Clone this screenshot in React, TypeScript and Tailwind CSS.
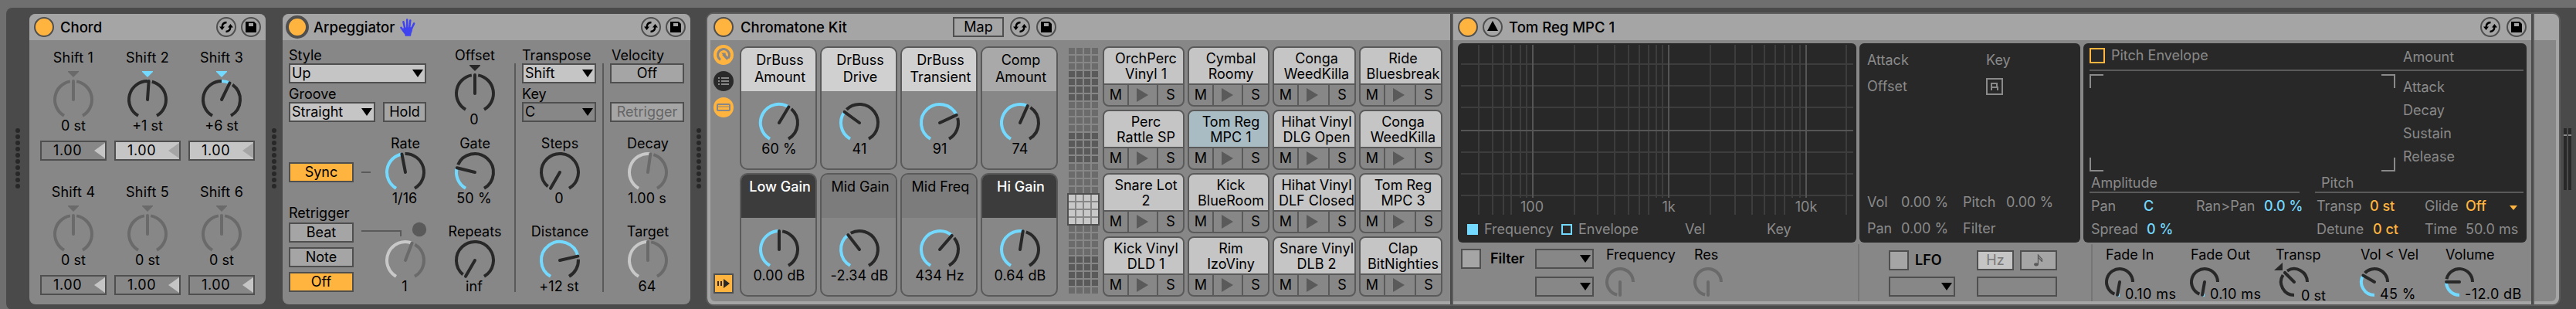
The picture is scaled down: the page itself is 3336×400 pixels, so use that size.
import type { ReactNode } from "react";

const BLUE = "#74d9ff";
const DARK = "#282828";
const MUTED = "#6a6a6a";

type KnobProps = {
  angle: number;
  label?: string;
  value: string;
  muted?: boolean;
  bipolar?: boolean;
};

function point(angle: number, r: number) {
  const a = (angle * Math.PI) / 180;
  return `${(Math.sin(a) * r).toFixed(2)} ${(-Math.cos(a) * r).toFixed(2)}`;
}

function arc(from: number, to: number, r: number) {
  if (to <= from) return "";
  return `M${point(from, r)}A${r} ${r} 0 ${to - from > 180 ? 1 : 0} 1 ${point(to, r)}`;
}

// Large dial, sweeps 300 degrees
function Dial({ angle, muted, bipolar }: { angle: number; muted?: boolean; bipolar?: boolean }) {
  const ink = muted ? MUTED : DARK;
  const fill = muted ? "#c8c8c8" : BLUE;
  return (
    <svg width="52" height="50" viewBox="-26 -26 52 50" className="block shrink-0 overflow-visible" fill="none" strokeWidth="4">
      {bipolar ? (
        <>
          <path d="M-7 -37H7V-36L0 -29L-7 -36Z" fill={muted || angle === 0 ? ink : BLUE} />
          <path d={arc(-150, angle === 0 ? -10 : 0, 24)} stroke={ink} />
          <path d={arc(0, angle, 24)} stroke={fill} />
        </>
      ) : (
        <path d={arc(-150, angle, 24)} stroke={fill} />
      )}
      <path d={arc(angle + 10, 150, 24)} stroke={ink} />
      <path d={`M0 0L${point(angle, 24)}`} stroke={ink} strokeLinecap="round" />
    </svg>
  );
}

function Knob({ label, value, ...dial }: KnobProps) {
  return (
    <div className="flex flex-col items-center whitespace-nowrap">
      <div className="h-5 leading-5">{label}</div>
      <div className="h-px" />
      <Dial {...dial} />
      <div className="h-5 pr-0.5 leading-5 tracking-[0.1px]">{value}</div>
    </div>
  );
}

// Small dial, sweeps from 6 o'clock to 3 o'clock
function SmallKnob({ label, value, angle, muted, bipolar }: { label: string; value?: string; angle: number; muted?: boolean; bipolar?: boolean }) {
  const ink = muted ? MUTED : DARK;
  return (
    <div className="w-[110px] whitespace-nowrap pt-[5px]">
      <div className="h-5 leading-5">{label}</div>
      <div className={bipolar ? "ml-[5px] flex h-[48px]" : "-ml-px flex h-[48px]"}>
        <svg width="38" height="38" viewBox="-19 -19 38 38" className="mt-1.5 block shrink-0 overflow-visible" fill="none" strokeWidth="4">
          {bipolar ? (
            <>
              <path d="M-15 -25V-15H-26Z" fill={ink} />
              <path d={arc(-180, angle - 13, 17)} stroke={ink} />
            </>
          ) : (
            <path d={arc(-180, angle, 17)} stroke={muted ? ink : BLUE} />
          )}
          <path d={arc(angle + 13, 90, 17)} stroke={ink} />
          <path d={`M0 0L${point(angle, 17)}`} stroke={ink} strokeLinecap="round" />
        </svg>
        <div className={bipolar ? "ml-[-10px] mt-[33px] leading-5" : "ml-[-12px] mt-[31px] leading-5 tracking-[0.4px]"}>{value}</div>
      </div>
    </div>
  );
}

function Power({ thick }: { thick?: boolean }) {
  return (
    <div
      className={
        thick
          ? "size-[30px] shrink-0 rounded-full border-4 border-[#4f4f4f] bg-[#ffb43f]"
          : "size-[26px] shrink-0 rounded-full border-2 border-[#4f4f4f] bg-[#ffb43f]"
      }
    />
  );
}

function SwapButton() {
  return (
    <svg width="26" height="26" viewBox="0 0 26 26" className="block shrink-0" fill="none">
      <circle cx="13" cy="13" r="12" stroke="#4f4f4f" strokeWidth="2" />
      <path d="M13.5 7C9.8 7.2 7.6 9.5 7.6 13.5M12.5 19C16.2 18.8 18.4 16.5 18.4 12.5" stroke="#000" strokeWidth="2.4" />
      <path d="M4 12.5H11L7.6 17ZM15 13.5H22L18.4 9Z" fill="#000" />
    </svg>
  );
}

function SaveButton() {
  return (
    <svg width="26" height="26" viewBox="0 0 26 26" className="block shrink-0" fill="none">
      <circle cx="13" cy="13" r="12" stroke="#4f4f4f" strokeWidth="2" />
      <path d="M6 6H17L20 9V20H6Z" fill="#000" />
      <path d="M10 8H16V12H10Z" fill="#a5a5a5" />
    </svg>
  );
}

function Title({ children }: { children: ReactNode }) {
  return <div className="whitespace-nowrap text-[18.5px] font-medium leading-none">{children}</div>;
}

function Select({ className, children }: { className: string; children?: string }) {
  return (
    <div className={`flex h-[26px] shrink-0 items-center justify-between border-2 border-[#4f4f4f] pl-0.5 pr-0.5 leading-none ${className}`}>
      <span>{children}</span>
      <svg width="14" height="10" viewBox="0 0 14 10" className="mb-px block">
        <path d="M0 0H14L7 10Z" fill="#000" />
      </svg>
    </div>
  );
}

function Toggle({ className, children }: { className: string; children?: ReactNode }) {
  return <div className={`flex h-[26px] shrink-0 items-center justify-center border-2 border-[#4f4f4f] leading-none ${className}`}>{children}</div>;
}

function DragDots({ className }: { className: string }) {
  return (
    <div className={`flex shrink-0 flex-col items-center gap-0.5 pt-[156px] ${className}`}>
      {Array.from({ length: 10 }, (_, i) => (
        <div key={i} className="size-1.5 shrink-0 rounded-full bg-[#282828]" />
      ))}
    </div>
  );
}

const shifts = [
  { label: "Shift 1", value: "0 st", angle: 0, active: false },
  { label: "Shift 2", value: "+1 st", angle: 4, active: true },
  { label: "Shift 3", value: "+6 st", angle: 26, active: true },
  { label: "Shift 4", value: "0 st", angle: 0, active: false },
  { label: "Shift 5", value: "0 st", angle: 0, active: false },
  { label: "Shift 6", value: "0 st", angle: 0, active: false },
];

function Chord() {
  return (
    <section className="mt-2 h-[376px] w-[306px] shrink-0 overflow-hidden rounded-lg bg-[#878787]">
      <header className="flex h-[34px] items-center bg-[#a5a5a5] px-1.5">
        <Power />
        <div className="ml-2 flex-1"><Title>Chord</Title></div>
        <div className="flex gap-1.5"><SwapButton /><SaveButton /></div>
      </header>
      <div className="grid grid-cols-[96px_96px_96px] pl-[9px] pt-[13px]">
        {shifts.map((s) => (
          <div key={s.label} className="flex h-[174px] flex-col items-center">
            <div className="h-5 leading-5 tracking-[0.2px]">{s.label}</div>
            <div className="h-[18px]" />
            <Dial angle={s.angle} muted={!s.active} bipolar />
            <div className="h-5 leading-5">{s.value}</div>
            <div className={`mt-[9px] flex h-[26px] w-[86px] items-center justify-between border-2 border-[#4f4f4f] pl-[15px] leading-none ${s.active ? "bg-[#c5c5c5]" : ""}`}>
              <span className="tracking-[0.6px]">1.00</span>
              <svg width="14" height="22" viewBox="0 0 14 22" className="block">
                <path d="M14 1V21L0 11Z" fill={s.active ? "#a5a5a5" : "#c5c5c5"} />
              </svg>
            </div>
          </div>
        ))}
      </div>
    </section>
  );
}

function Hand() {
  return (
    <svg width="20" height="23" viewBox="0 0 20 23" className="ml-[7px] block" fill="#4043f0" stroke="#4043f0" strokeLinecap="round">
      <path d="M5 12L16 11.5L15.5 16C15 18 14 19 13.8 22.5H7C6.5 19.5 5 18 3.5 16Z" strokeWidth="0.5" />
      <path d="M6.6 14L4.4 4.2M9.3 12L9.2 1.6M12.2 12L13.3 2.4M14.8 13.5L18.2 6.4M6 18L1.4 11.8" fill="none" strokeWidth="2.5" />
    </svg>
  );
}

function Arpeggiator() {
  return (
    <section className="mt-2 h-[376px] w-[528px] shrink-0 overflow-hidden rounded-lg bg-[#878787]">
      <header className="flex h-[34px] items-center bg-[#a5a5a5] pl-1 pr-1.5">
        <Power thick />
        <div className="ml-1.5 flex flex-1 items-center"><Title>Arpeggiator</Title><Hand /></div>
        <div className="flex gap-1.5"><SwapButton /><SaveButton /></div>
      </header>
      <div className="flex">
        <div className="w-[300px] pl-2">
          <div className="flex h-[124px] pt-[10px]">
            <div className="w-[178px]">
              <div className="h-5 leading-5">Style</div>
              <Select className="bg-[#c5c5c5]">Up</Select>
              <div className="mt-1 h-5 leading-5">Groove</div>
              <div className="flex justify-between">
                <Select className="w-[112px] bg-[#c5c5c5]">Straight</Select>
                <Toggle className="w-[56px] bg-[#a5a5a5]">Hold</Toggle>
              </div>
            </div>
            <div className="ml-[18px] flex w-[90px] flex-col items-center">
              <div className="h-5 leading-5">Offset</div>
              <div className="h-[13px]" />
              <Dial angle={0} bipolar />
              <div className="h-5 pr-0.5 leading-5">0</div>
            </div>
          </div>
          <div className="relative flex">
            <div className="w-[84px] pt-[34px]">
              <Toggle className="bg-[#ffb43f]">Sync</Toggle>
              <div className="mt-[30px] h-5 leading-5">Retrigger</div>
              <div className="mt-0.5 flex flex-col gap-1.5">
                <Toggle className="bg-[#a5a5a5]">Beat</Toggle>
                <Toggle className="bg-[#a5a5a5]">Note</Toggle>
                <Toggle className="bg-[#ffb43f]">Off</Toggle>
              </div>
            </div>
            <svg width="90" height="100" className="absolute left-[94px] top-[40px] block" fill="none">
              <path d="M0 7H12M0 83H51V90" stroke="#5a5a5a" strokeWidth="2" />
              <circle cx="75" cy="81" r="9.2" fill="#5a5a5a" />
            </svg>
            <div className="ml-[22px] grid grid-cols-[90px_90px] gap-y-[23px]">
              <Knob label="Rate" value="1/16" angle={-11} />
              <Knob label="Gate" value="50 %" angle={-76} />
              <Knob value="1" angle={21} muted />
              <Knob label="Repeats" value="inf" angle={-150} />
            </div>
          </div>
        </div>
        <div className="mt-[30px] h-[296px] w-0.5 bg-[#5a5a5a]" />
        <div className="w-[112px] px-2 pt-[10px]">
          <div className="h-5 leading-5">Transpose</div>
          <Select className="bg-[#c5c5c5]">Shift</Select>
          <div className="mt-1 h-5 leading-5">Key</div>
          <Select className="w-[96px]">C</Select>
          <div className="mt-[18px] flex flex-col gap-[23px] pl-0.5">
            <Knob label="Steps" value="0" angle={-150} />
            <Knob label="Distance" value="+12 st" angle={77} />
          </div>
        </div>
        <div className="mt-[30px] h-[296px] w-0.5 bg-[#5a5a5a]" />
        <div className="w-[112px] px-2 pt-[10px]">
          <div className="h-5 pl-0.5 leading-5">Velocity</div>
          <Toggle className="bg-[#a5a5a5]">Off</Toggle>
          <Toggle className="mt-6 bg-[#a5a5a5] text-[#666]">Retrigger</Toggle>
          <div className="mt-[18px] flex flex-col gap-[23px] pl-0.5">
            <Knob label="Decay" value="1.00 s" angle={8} muted />
            <Knob label="Target" value="64" angle={0} muted />
          </div>
        </div>
      </div>
    </section>
  );
}

const macros = [
  { lines: ["DrBuss", "Amount"], value: "60 %", angle: 31, head: "bg-[#d0d0d0]" },
  { lines: ["DrBuss", "Drive"], value: "41", angle: -54, head: "bg-[#d0d0d0]" },
  { lines: ["DrBuss", "Transient"], value: "91", angle: 65, head: "bg-[#d0d0d0]" },
  { lines: ["Comp", "Amount"], value: "74", angle: 24, head: "bg-[#a9a9a9]" },
  { lines: ["Low Gain"], value: "0.00 dB", angle: 0, head: "bg-[#3c3c3c] font-medium text-white" },
  { lines: ["Mid Gain"], value: "-2.34 dB", angle: -38, head: "bg-[#7c7c7c]" },
  { lines: ["Mid Freq"], value: "434 Hz", angle: 41, head: "bg-[#7c7c7c]" },
  { lines: ["Hi Gain"], value: "0.64 dB", angle: 9, head: "bg-[#3c3c3c] font-medium text-white" },
];

const pads = [
  ["OrchPerc", "Vinyl 1"],
  ["Cymbal", "Roomy"],
  ["Conga", "WeedKilla"],
  ["Ride", "Bluesbreak"],
  ["Perc", "Rattle SP"],
  ["Tom Reg", "MPC 1"],
  ["Hihat Vinyl", "DLG Open"],
  ["Conga", "WeedKilla"],
  ["Snare Lot", "2"],
  ["Kick", "BlueRoom"],
  ["Hihat Vinyl", "DLF Closed"],
  ["Tom Reg", "MPC 3"],
  ["Kick Vinyl", "DLD 1"],
  ["Rim", "IzoViny"],
  ["Snare Vinyl", "DLB 2"],
  ["Clap", "BitNighties"],
];

const SELECTED_PAD = 5;

function overviewShade(row: number) {
  if (row >= 19 && row <= 22) return "bg-[#c8c8c8]";
  return Math.floor((row + 5) / 4) % 2 === 0 ? "bg-[#5a5a5a]" : "bg-[#6b6b6b]";
}

function RackIcons() {
  return (
    <div className="flex w-[26px] flex-col gap-2 pb-[10px] pt-1.5">
      <svg width="26" height="26" viewBox="-13 -13 26 26" className="block" fill="none">
        <circle r="13" fill="#ffb43f" />
        <path d="M-4 6.4A7.5 7.5 0 1 1 6.2 4.4" stroke="#878787" strokeWidth="3" />
        <path d="M-0.5 -1L5.5 5.5" stroke="#878787" strokeWidth="3.4" />
        <path d="M-3 -2.5H2.6V2.8Z" fill="#878787" />
      </svg>
      <svg width="26" height="26" viewBox="0 0 26 26" className="block" fill="none">
        <circle cx="13" cy="13" r="13" fill="#2a2a2a" />
        <path d="M6 9H8M10 9H20M6 13H8M10 13H20M6 17H8M10 17H20" stroke="#878787" strokeWidth="2" />
      </svg>
      <svg width="26" height="26" viewBox="0 0 26 26" className="block" fill="none">
        <circle cx="13" cy="13" r="13" fill="#ffb43f" />
        <rect x="5" y="9" width="16" height="8" rx="1" stroke="#878787" strokeWidth="2" />
        <path d="M6 12H20" stroke="#878787" />
      </svg>
      <svg width="26" height="26" viewBox="0 0 26 26" className="mt-auto block" fill="none">
        <rect x="1" y="1" width="24" height="24" fill="#ffb43f" stroke="#4f4f4f" strokeWidth="2" />
        <path d="M5 10H7V16H5ZM9 10H11V16H9ZM13 7L21 13L13 19Z" fill="#282828" />
      </svg>
    </div>
  );
}

function DrumRack() {
  return (
    <div className="w-[962px] shrink-0">
      <header className="flex h-[34px] items-center bg-[#a5a5a5] pl-2 pr-[510px]">
        <Power />
        <div className="ml-[9px] flex-1"><Title>Chromatone Kit</Title></div>
        <div className="flex gap-2">
          <Toggle className="w-[66px]">Map</Toggle>
          <SwapButton />
          <SaveButton />
        </div>
      </header>
      <div className="ml-1 flex h-[338px] rounded-bl-md bg-[#878787] pl-1">
        <RackIcons />
        <div className="ml-2 mt-2 grid h-[324px] grid-cols-[100px_100px_100px_100px] gap-1">
          {macros.map((m) => (
            <div key={m.lines.join(" ")} className="h-[160px] overflow-hidden whitespace-nowrap rounded-[10px] border-2 border-[#5a5a5a]">
              <div className={`h-[56px] pl-1 pt-[5px] text-center leading-[22px] ${m.head}`}>
                {m.lines.map((l) => (
                  <div key={l}>{l}</div>
                ))}
              </div>
              <div className="flex flex-col items-center pl-0.5 pt-[15px]">
                <Dial angle={m.angle} />
                <div className="h-5 leading-5 tracking-[0.1px]">{m.value}</div>
              </div>
            </div>
          ))}
        </div>
        <div className="relative ml-[14px] mt-[10px] grid h-[318px] grid-cols-[8px_8px_8px_8px] gap-0.5">
          {Array.from({ length: 128 }, (_, i) => (
            <div key={i} className={`size-2 ${overviewShade(Math.floor(i / 4))}`} />
          ))}
          <div className="absolute left-[-2px] top-[188px] size-[42px] border-2 border-[#4f4f4f]" />
        </div>
        <div className="ml-1.5 mt-2 grid h-[324px] grid-cols-[106px_106px_108px_108px] gap-1">
          {pads.map(([top, bottom], i) => (
            <div key={i} className="flex h-[78px] flex-col overflow-hidden rounded-lg border-2 border-[#5a5a5a]">
              <div className={`flex h-[46px] flex-col items-center overflow-hidden whitespace-nowrap pl-1.5 pt-1 leading-5 ${i === SELECTED_PAD ? "bg-[#a9bcc4]" : "bg-[#c5c5c5]"}`}>
                <div>{top}</div>
                <div>{bottom}</div>
              </div>
              <div className="flex h-7 border-t-2 border-[#5a5a5a] leading-[26px]">
                <div className="w-[30px] text-center">M</div>
                <div className="flex flex-1 items-center border-x-2 border-[#5a5a5a] pl-[10px]">
                  <svg width="15" height="18" viewBox="0 0 15 18"><path d="M0 0L15 9L0 18Z" fill="#5a5a5a" /></svg>
                </div>
                <div className="w-8 text-center">S</div>
              </div>
            </div>
          ))}
        </div>
      </div>
      <div className="h-1 bg-[#a5a5a5]" />
    </div>
  );
}

const gridX = [1915, 1933, 1947, 1957, 2039, 2069, 2091, 2109, 2123, 2135, 2215, 2247, 2269, 2285, 2299, 2311, 2391];
const gridXShort = [1969, 1977, 2145, 2153, 2321, 2331];
const gridXMajor = [1985, 2161, 2339];

function FilterGraph() {
  return (
    <div className="h-[258px] w-[516px] rounded-md bg-[#282828]">
      <svg width="516" height="230" viewBox="1888 56 516 230" className="block" strokeWidth="2" fontSize="18">
        <path d={gridX.map((x) => `M${x} 58V278`).join("") + gridXShort.map((x) => `M${x} 58V256`).join("")} stroke="#3d3d3d" />
        <path d="M1892 83H2400M1892 111H2400M1892 139H2400M1892 197H2400M1892 225H2400M1892 253H2400" stroke="#3d3d3d" />
        <path d={gridXMajor.map((x) => `M${x} 58V256`).join("") + "M1892 169H2400"} stroke="#555" />
        <g fill="#8a8a8a" textAnchor="middle">
          <text x="1984" y="274">100</text>
          <text x="2161" y="274">1k</text>
          <text x="2339" y="274">10k</text>
        </g>
      </svg>
      <div className="flex items-center pl-3 leading-[22px]">
        <div className="size-3.5 bg-[#74d9ff]" />
        <div className="ml-2 w-[100px]">Frequency</div>
        <div className="size-3.5 border-2 border-[#74d9ff]" />
        <div className="ml-2 w-[138px]">Envelope</div>
        <div className="w-[106px]">Vel</div>
        <div>Key</div>
      </div>
    </div>
  );
}

function LfoPanel() {
  return (
    <div className="flex h-[258px] w-[286px] flex-col justify-between whitespace-nowrap rounded-md bg-[#282828] pb-[7px] pl-[10px] pt-[11px]">
      <div className="grid grid-cols-[154px_60px] gap-y-3 leading-[22px]">
        <div>Attack</div>
        <div>Key</div>
        <div>Offset</div>
        <svg width="22" height="22" viewBox="0 0 22 22" className="block" fill="none" stroke="#8a8a8a" strokeWidth="2">
          <rect x="1" y="1" width="20" height="20" />
          <path d="M7 16V7H14V12H7M11 12H15V16" />
        </svg>
      </div>
      <div className="grid grid-cols-[44px_80px_56px_70px] gap-y-3 leading-[22px]">
        <div>Vol</div>
        <div>0.00 %</div>
        <div>Pitch</div>
        <div>0.00 %</div>
        <div>Pan</div>
        <div>0.00 %</div>
        <div>Filter</div>
      </div>
    </div>
  );
}

function PitchPanel() {
  return (
    <div className="h-[258px] w-[574px] whitespace-nowrap rounded-md bg-[#282828] pl-2 pr-1">
      <div className="flex h-9 items-center border-b-2 border-[#5a5a5a] pb-0.5">
        <div className="size-5 border-2 border-[#ffb43f]" />
        <div className="ml-2 w-[378px] pb-px">Pitch Envelope</div>
        <div className="pt-0.5">Amount</div>
      </div>
      <div className="flex pt-1">
        <svg width="396" height="126" viewBox="0 0 396 126" className="block" fill="none" stroke="#8a8a8a" strokeWidth="2">
          <path d="M18 1H1V18M378 1H395V18M18 125H1V108M378 125H395V108" />
        </svg>
        <div className="-my-px ml-2.5 pt-[3px] leading-[30px]">
          <div>Attack</div>
          <div>Decay</div>
          <div>Sustain</div>
          <div>Release</div>
        </div>
      </div>
      <div className="flex justify-between pt-1 leading-[22px]">
        <div className="w-[272px] border-b-2 border-[#5a5a5a] pl-0.5">Amplitude</div>
        <div className="w-[270px] border-b-2 border-[#5a5a5a] pl-2">Pitch</div>
      </div>
      <div className="grid grid-cols-[68px_68px_88px_68px_69px_71px_53px_1fr] gap-y-2 pl-0.5 pt-1.5 leading-[22px]">
        <div>Pan</div>
        <div className="font-medium text-[#74d9ff]">C</div>
        <div>Ran&gt;Pan</div>
        <div className="font-medium text-[#74d9ff]">0.0 %</div>
        <div>Transp</div>
        <div className="font-medium text-[#ffb43f]">0 st</div>
        <div>Glide</div>
        <div className="flex items-center font-medium text-[#ffb43f]">
          Off
          <svg width="10" height="6" viewBox="0 0 10 6" className="ml-auto mr-2 mt-1"><path d="M0 0H10L5 6Z" fill="#ffb43f" /></svg>
        </div>
        <div>Spread</div>
        <div className="pl-1 font-medium text-[#74d9ff]">0 %</div>
        <div />
        <div />
        <div>Detune</div>
        <div className="pl-1 font-medium text-[#ffb43f]">0 ct</div>
        <div>Time</div>
        <div>50.0 ms</div>
      </div>
    </div>
  );
}

function Sampler() {
  return (
    <div className="w-[1396px] shrink-0">
      <header className="flex h-[34px] items-center gap-1.5 bg-[#a5a5a5] px-1.5">
        <Power />
        <svg width="26" height="26" viewBox="0 0 26 26" className="block shrink-0" fill="none">
          <circle cx="13" cy="13" r="12" stroke="#4f4f4f" strokeWidth="2" />
          <path d="M13 5L20 18H6Z" fill="#000" />
        </svg>
        <div className="flex-1 pl-0.5"><Title>Tom Reg MPC 1</Title></div>
        <div className="flex gap-2"><SwapButton /><SaveButton /></div>
      </header>
      <div className="h-[338px] bg-[#878787] pl-1.5 pt-1">
        <div className="flex gap-1 text-[#8a8a8a]">
          <FilterGraph />
          <LfoPanel />
          <PitchPanel />
        </div>
        <div className="mt-0.5 flex h-[74px]">
          <div className="flex w-[520px] border-r-2 border-[#757575] pl-1">
            <div className="flex pt-1.5">
              <Toggle className="w-[26px] bg-[#a5a5a5]" />
              <div className="ml-3 w-[58px] font-semibold leading-[26px]">Filter</div>
            </div>
            <div className="flex w-[92px] flex-col gap-[10px] pt-1.5">
              <Select className="w-[76px]" />
              <Select className="w-[76px]" />
            </div>
            <div className="-mt-px flex gap-1">
              <SmallKnob label="Frequency" angle={-180} muted />
              <SmallKnob label="Res" angle={-180} muted />
            </div>
          </div>
          <div className="flex w-[302px] border-r-2 border-[#757575] pl-[38px] pt-2">
            <div className="flex w-[114px] flex-col gap-2">
              <div className="flex">
                <Toggle className="w-[26px] bg-[#a5a5a5]" />
                <div className="ml-2 font-semibold leading-[26px]">LFO</div>
              </div>
              <Select className="w-[86px]" />
            </div>
            <div className="flex w-[104px] flex-col gap-2">
              <div className="flex justify-between">
                <Toggle className="w-12 bg-[#c5c5c5] text-[#777]">Hz</Toggle>
                <Toggle className="w-12 bg-[#a5a5a5]">
                  <svg width="12" height="16" viewBox="0 0 12 16" fill="none" stroke="#5a5a5a" strokeWidth="1.2" className="block">
                    <ellipse cx="3" cy="13.3" rx="2.9" ry="2.1" fill="#5a5a5a" stroke="none" />
                    <path d="M5.4 13.5V1L10.5 6.5V10M5.4 4L10.5 9.5" />
                  </svg>
                </Toggle>
              </div>
              <Toggle className="w-[104px]" />
            </div>
          </div>
          <div className="-mt-px flex pl-[17px]">
            <SmallKnob label="Fade In" value="0.10 ms" angle={-170} />
            <SmallKnob label="Fade Out" value="0.10 ms" angle={-170} />
            <SmallKnob label="Transp" value="0 st" angle={-45} bipolar />
            <SmallKnob label="Vol < Vel" value="45 %" angle={-60} />
            <SmallKnob label="Volume" value="-12.0 dB" angle={-90} />
          </div>
        </div>
      </div>
      <div className="h-1 bg-[#a5a5a5]" />
    </div>
  );
}

function Divider() {
  return <div className="w-1 shrink-0 border-r-2 border-[#5c5c5c] bg-[#4a4a4a]" />;
}

export default function App() {
  return (
    <div className="h-[400px] w-[3336px] overflow-hidden bg-[#6f6f6f] pl-2 pt-[10px] font-['Inter',sans-serif] text-[18px] text-black">
      <main className="flex h-[391px] rounded-l-lg bg-[#4a4a4a]">
        <DragDots className="w-[30px]" />
        <Chord />
        <DragDots className="w-[22px]" />
        <Arpeggiator />
        <DragDots className="w-5 pl-0.5" />
        <div className="mt-1.5 flex h-[380px] w-[2402px] shrink-0 overflow-hidden rounded-[10px] border-2 border-[#5c5c5c] bg-[#a5a5a5]">
          <DrumRack />
          <Divider />
          <Sampler />
          <Divider />
          <div className="w-8 pt-[34px]">
            <div className="mr-1 h-[338px] rounded-br-md bg-[#878787]" />
          </div>
        </div>
        <div className="ml-1 mt-[156px] flex h-20 gap-0.5">
          <div className="w-1 bg-[#282828] pt-2"><div className="h-0.5 bg-[#8a8a8a]" /></div>
          <div className="w-1 bg-[#282828] pt-2"><div className="h-0.5 bg-[#8a8a8a]" /></div>
        </div>
      </main>
    </div>
  );
}
